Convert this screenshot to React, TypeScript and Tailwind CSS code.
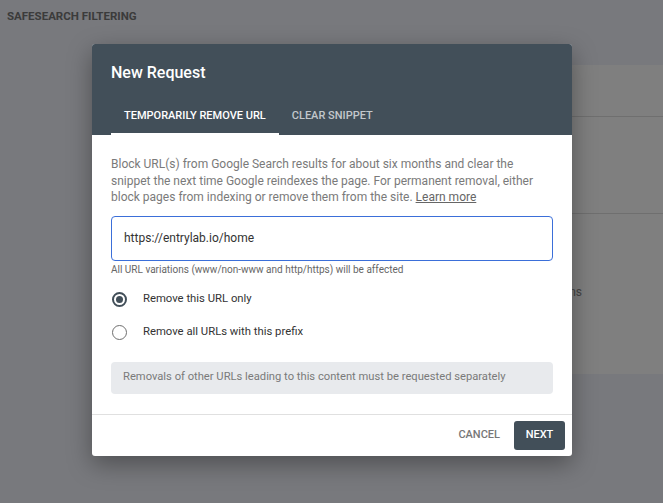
import React from "react";

const font = { fontFamily: "Roboto, 'Liberation Sans', sans-serif" };

const Radio = ({ checked, label }: { checked: boolean; label: string }) => (
  <label className="flex items-center h-[20px]">
    <span
      className={
        checked
          ? "w-[15px] h-[15px] rounded-full border-2 border-[#424f59] flex items-center justify-center ml-[1px]"
          : "w-[15px] h-[15px] rounded-full border-[1.5px] border-[#6f6f6f] ml-[1px]"
      }
    >
      {checked && <span className="w-[7px] h-[7px] rounded-full bg-[#424f59]" />}
    </span>
    <span className="ml-[16px] text-[11.3px] text-[#333]">{label}</span>
  </label>
);

const App = () => {
  return (
    <div className="relative w-[663px] h-[503px] overflow-hidden bg-[#f0f2fa]" style={font}>
      {/* page behind the dialog */}
      <div className="pt-[8px] pl-[7px] text-[11.5px] font-bold text-[#777]">
        SAFESEARCH FILTERING
      </div>
      <div className="ml-[300px] mt-[40px] w-[420px] bg-white">
        <div className="h-[52px] border-b border-[#dedede]" />
        <div className="h-[97px] border-b border-[#dedede]" />
        <div className="h-[160px] flex items-center">
          <div className="w-[282px] text-right text-[12px] text-[#888] pb-[4px]">Show explicit results for these options</div>
        </div>
      </div>

      {/* overlay */}
      <div className="absolute inset-0 bg-black/50" />

      {/* dialog */}
      <div className="absolute left-[92px] top-[44px] w-[480px] bg-white rounded-[3px] shadow-[0_8px_24px_rgba(0,0,0,0.35)] overflow-hidden">
        <div className="bg-[#424f59] pt-[19px] px-[19px]">
          <h2 className="text-[16px] leading-[20px] font-medium text-white">New Request</h2>
          <div className="flex mt-[15px]">
            <div className="relative h-[37px] px-[13px] flex items-center text-[11px] font-medium text-white">
              TEMPORARILY REMOVE URL
              <span className="absolute left-0 right-0 bottom-0 h-[2px] bg-white" />
            </div>
            <div className="h-[37px] px-[13px] flex items-center text-[11px] font-medium text-[#c3c8cc]">
              CLEAR SNIPPET
            </div>
          </div>
        </div>

        <div className="px-[19px] pt-[21px]">
          <p className="text-[12px] leading-[16.5px] text-[#7a7a7a]">
            Block URL(s) from Google Search results for about six months and clear the snippet the next time Google
            reindexes the page. For permanent removal, either block pages from indexing or remove them from the site.{" "}
            <a className="underline text-[#666]">Learn more</a>
          </p>
          <div className="mt-[10px] h-[45px] border border-[#3b6fd9] rounded-[4px] flex items-center px-[12px] text-[12px] text-[#333]">
            https://entrylab.io/home
          </div>
          <div className="mt-[3px] text-[10px] leading-[12px] text-[#666]">
            All URL variations (www/non-www and http/https) will be affected
          </div>
          <div className="mt-[14px] flex flex-col gap-[13px]">
            <Radio checked label="Remove this URL only" />
            <Radio checked={false} label="Remove all URLs with this prefix" />
          </div>
          <div className="mt-[19px] h-[32px] bg-[#e8eaed] rounded-[4px] flex items-center px-[12px] text-[11.2px] text-[#7a7a7a]">
            Removals of other URLs leading to this content must be requested separately
          </div>
        </div>

        <div className="mt-[20px] border-t border-[#e0e0e0] flex justify-end items-center gap-[13px] pt-[6px] pb-[6px] pr-[7px]">
          <button className="h-[29px] px-[1px] text-[11px] font-medium text-[#777]">CANCEL</button>
          <button className="h-[29px] w-[51px] rounded-[3px] bg-[#424f59] text-[11px] font-medium text-white">
            NEXT
          </button>
        </div>
      </div>
    </div>
  );
};

export default App;
